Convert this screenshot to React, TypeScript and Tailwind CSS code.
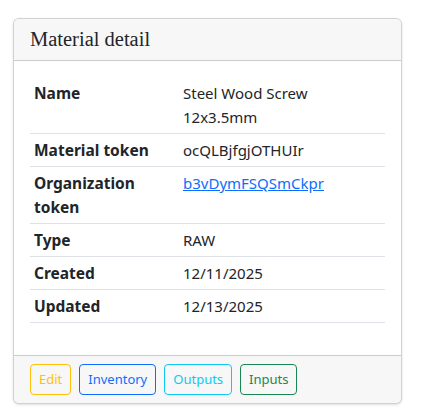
const rows: { label: string; value: string; link?: boolean }[] = [
  { label: "Name", value: "Steel Wood Screw 12x3.5mm" },
  { label: "Material token", value: "ocQLBjfgjOTHUIr" },
  { label: "Organization token", value: "b3vDymFSQSmCkpr", link: true },
  { label: "Type", value: "RAW" },
  { label: "Created", value: "12/11/2025" },
  { label: "Updated", value: "12/13/2025" },
];

const buttons = [
  { label: "Edit", cls: "border-[#ffc107] text-[#ffc107]" },
  { label: "Inventory", cls: "border-[#0d6efd] text-[#0d6efd]" },
  { label: "Outputs", cls: "border-[#0dcaf0] text-[#0dcaf0]" },
  { label: "Inputs", cls: "border-[#198754] text-[#198754]" },
];

export default function App() {
  return (
    <div className="min-h-screen bg-white px-[13px] pt-[18px] font-['Noto_Sans',sans-serif] text-[#212529]">
      <div className="w-[389px] overflow-hidden rounded-md border border-black/[0.175] bg-white shadow-sm">
        <div className="border-b border-black/[0.175] bg-[#f7f7f7] px-4 py-2">
          <h5 className="font-['Liberation_Serif',serif] text-[20.5px] leading-[25px]">Material detail</h5>
        </div>
        <div className="p-4">
          <table className="mb-4 w-full border-collapse text-[15px] leading-6">
            <tbody>
              {rows.map((r) => (
                <tr key={r.label} className="border-b border-[#dee2e6] align-top">
                  <th className="w-[149px] p-1 text-left text-[15.5px] font-bold">{r.label}</th>
                  <td className="p-1">
                    {r.link ? (
                      <a href="#" className="text-[#0d6efd] underline">
                        {r.value}
                      </a>
                    ) : (
                      r.value
                    )}
                  </td>
                </tr>
              ))}
            </tbody>
          </table>
        </div>
        <div className="flex gap-2 border-t border-black/[0.175] bg-[#f7f7f7] px-4 py-2">
          {buttons.map((b) => (
            <button key={b.label} className={`rounded border px-2 py-1 text-[13px] leading-[21px] ${b.cls}`}>
              {b.label}
            </button>
          ))}
        </div>
      </div>
    </div>
  );
}
